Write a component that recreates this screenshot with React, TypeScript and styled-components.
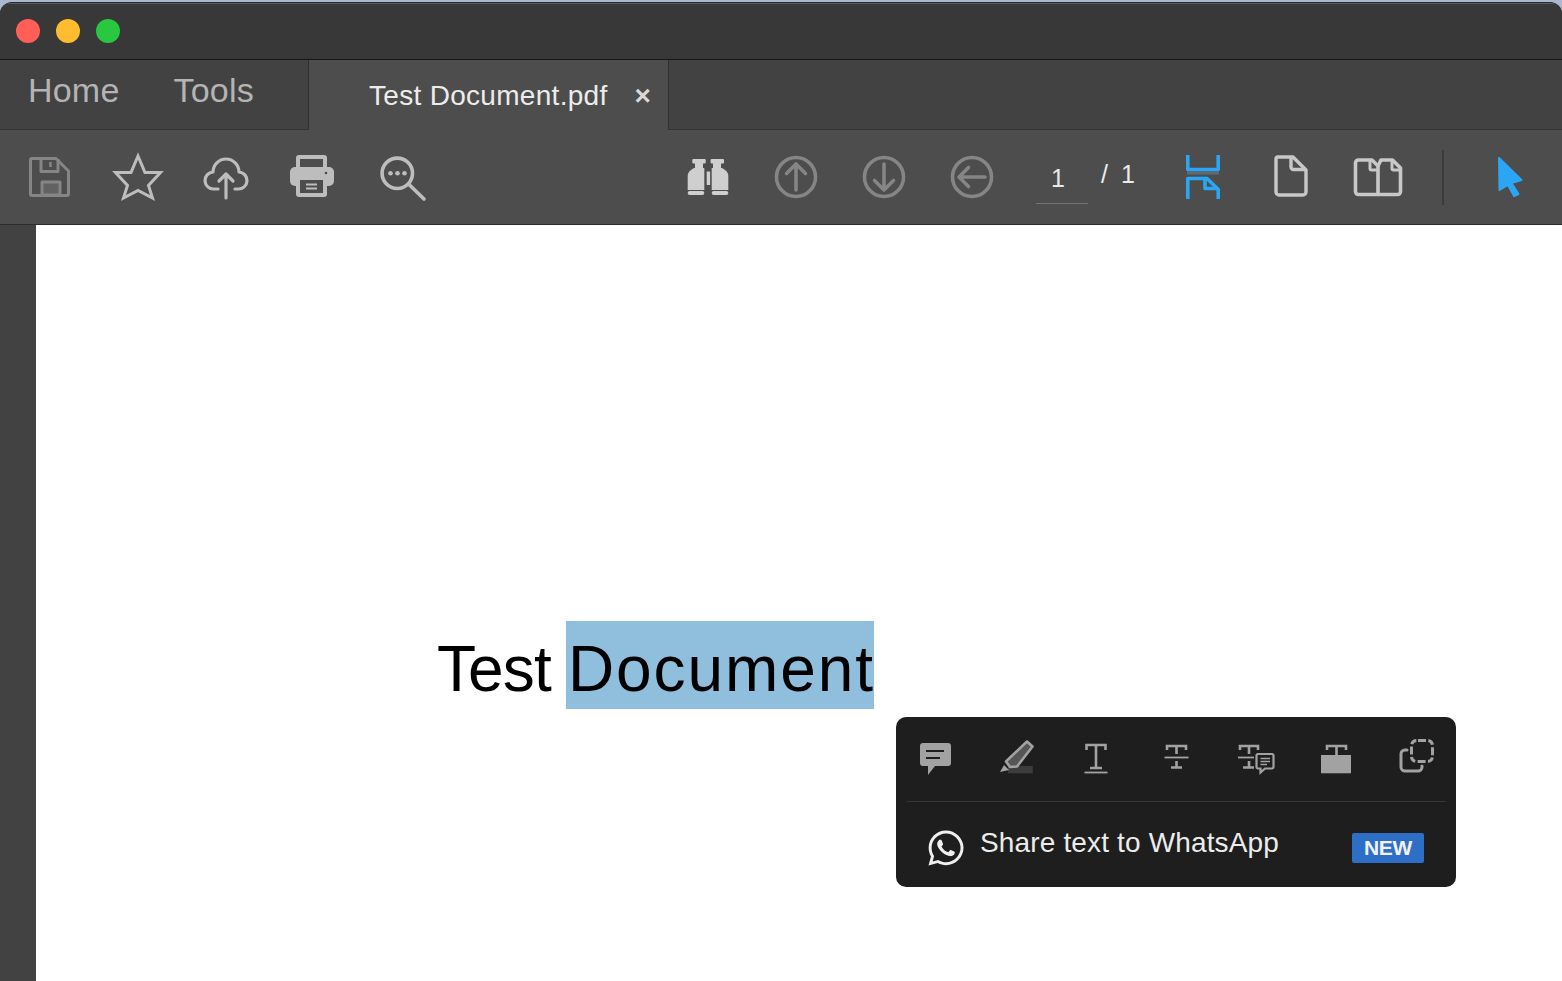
import React from "react";
import styled, { createGlobalStyle } from "styled-components";
import { FaWhatsapp } from "react-icons/fa";

const Global = createGlobalStyle`
  html, body { margin: 0; padding: 0; height: 100%; overflow: hidden; background: #aab8ce; }
  #root { height: 100%; }
  * { box-sizing: border-box; }
`;

const Win = styled.div`
  width: 1562px; height: 981px; display: flex; flex-direction: column; padding-top: 2px;
  font-family: "Liberation Sans", Arial, sans-serif; overflow: hidden;
`;
const Shell = styled.div`
  flex: 1; display: flex; flex-direction: column; min-height: 0;
  border-radius: 12px 12px 0 0; overflow: hidden; background: #383838;
  border-top: 1px solid #252a33; position: relative;
`;
const TitleBar = styled.div`
  height: 57px; flex: none; display: flex; align-items: center; gap: 16px; padding: 0 0 0 16px;
  background: #383838; border-bottom: 1px solid #141414; box-shadow: inset 0 1px #5e5e5e;
`;
const Light = styled.span<{ $c: string }>`
  width: 24px; height: 24px; border-radius: 50%; background: ${(p) => p.$c}; flex: none;
`;
const TabBar = styled.div`
  height: 70px; flex: none; display: flex; background: #424242; border-bottom: 1px solid #343434;
`;
const NavTabs = styled.div`
  width: 309px; flex: none; display: flex; align-items: center; padding: 0 0 9px 28px; gap: 54px;
  font-size: 34px; color: #b4b4b4; border-right: 1px solid #303030;
`;
const NavTab = styled.span<{ $spacing: number }>`
  letter-spacing: ${(p) => p.$spacing}px;
`;
const DocTab = styled.div`
  width: 360px; height: 70px; flex: none; display: flex; align-items: center; background: #4d4d4d;
  padding: 2px 0 0 60px; color: #ececec; font-size: 28px; letter-spacing: 0.3px; border-right: 1px solid #303030;
  position: relative; z-index: 1;
`;
const Close = styled.span`
  margin-left: 27px; font-size: 28px; font-weight: 700; color: #d8d8d8; line-height: 1;
`;
const Toolbar = styled.div`
  height: 95px; flex: none; display: flex; align-items: center; padding-left: 6px;
  background: #4d4d4d; border-bottom: 1px solid #2c2c2c;
`;
const Slot = styled.svg`
  width: 88px; height: 94px; flex: none; display: block;
`;
const Spacer = styled.div`
  width: 218px; flex: none;
`;
const PageBox = styled.div`
  width: 52px; height: 94px; flex: none; margin-left: 20px; padding-top: 33px; text-align: center;
  font-size: 25px; color: #e8e8e8; position: relative; padding-right: 8px;
  line-height: 30px;
  &::after { content: ""; position: absolute; left: 0; right: 0; top: 73px; height: 1px; background: #757575; }
`;
const PageTotal = styled.div`
  width: 71px; height: 94px; flex: none; padding: 29px 0 0 13px; font-size: 25px; color: #ececec;
  word-spacing: 6px; line-height: 30px;
`;
const VDivider = styled.div`
  width: 2px; height: 55px; flex: none; background: #3b3b3b; margin: 0 23px 0 19px;
`;
const Main = styled.div`
  flex: 1; display: flex; min-height: 0; position: relative;
`;
const Side = styled.div`
  width: 36px; flex: none; background: #424242;
`;
const Paper = styled.div`
  flex: 1; background: #fff; padding: 396px 0 0 402px;
`;
const Line = styled.div`
  display: flex; height: 88px; align-items: flex-start; font-size: 64px; color: #000; line-height: 96px;
`;
const Plain = styled.span`
  width: 128px; letter-spacing: -0.9px; flex: none; margin-left: -1px; padding-left: 0;
`;
const Selected = styled.span`
  width: 308px; height: 88px; background: #8fbfdd; flex: none; letter-spacing: 1.9px; white-space: nowrap;
  padding-left: 2px; margin-left: 1px;
`;
const Popup = styled.div`
  position: absolute; left: 896px; top: 492px; width: 560px; height: 170px; border-radius: 10px;
  background: #1e1e1e; display: flex; flex-direction: column;
`;
const PopIcons = styled.div`
  display: flex; height: 85px; flex: none; position: relative;
  &::after { content: ""; position: absolute; left: 11px; right: 10px; bottom: 0; height: 1px; background: #363636; }
`;
const PopSlot = styled.svg`
  width: 80px; height: 84px; flex: none; display: block;
`;
const ShareRow = styled.div`
  flex: 1; display: flex; align-items: center; padding: 0 32px 0 30px; color: #ececec; font-size: 28px;
`;
const WA = styled(FaWhatsapp)`
  width: 40px; height: 40px; flex: none; margin: 7px 14px 0 0; color: #efefef;
`;
const ShareText = styled.span`
  flex: 1; padding-bottom: 4px; white-space: nowrap; letter-spacing: 0.15px;
`;
const Badge = styled.span`
  width: 72px; height: 30px; background: #2d6fc6; border-radius: 2px; color: #f2f2f2; font-size: 21px;
  font-weight: 700; display: flex; align-items: center; justify-content: center; letter-spacing: -0.4px;
  margin-top: 7px;
`;

const G1 = "#858585";
const G2 = "#bdbdbd";
const G3 = "#a2a2a2";
const BLUE = "#2aa6f5";
const BG = "#4d4d4d";
const POP = "#1e1e1e";

const ArrowCircle = ({ d }: { d: string }) => (
  <Slot viewBox="0 0 88 94" fill="none" stroke={G1} strokeWidth={3.6} strokeLinecap="round" strokeLinejoin="round">
    <circle cx="44" cy="47" r="19.5" />
    <path d={d} />
  </Slot>
);

export default function App() {
  return (
    <Win>
      <Global />
      <Shell>
        <TitleBar>
          <Light $c="#ff5f57" />
          <Light $c="#febc2e" />
          <Light $c="#28c840" />
        </TitleBar>
        <TabBar>
          <NavTabs>
            <NavTab $spacing={0.2}>Home</NavTab>
            <NavTab $spacing={0.2}>Tools</NavTab>
          </NavTabs>
          <DocTab>
            Test Document.pdf<Close>×</Close>
          </DocTab>
        </TabBar>
        <Toolbar>
          {/* save */}
          <Slot viewBox="0 0 88 94" fill="none" stroke={G1} strokeWidth={3} strokeLinejoin="round">
            <path d="M26 28.5H50L62.5 41V64a1.5 1.5 0 0 1-1.5 1.5H26a1.5 1.5 0 0 1-1.5-1.5V30a1.5 1.5 0 0 1 1.5-1.5Z" />
            <path d="M35 29V41.5H52V29" />
            <path d="M44.5 32V37" strokeWidth={2.5} />
            <rect x="36" y="52" width="18" height="13" fill="#626262" />
          </Slot>
          {/* star */}
          <Slot viewBox="0 0 88 94" fill="none" stroke={G2} strokeWidth={3} strokeLinejoin="miter">
            <path d="M44 26L51 42.5H66.5L54.5 55.5L58.5 68L44 60.5L29.5 68L33.5 55.5L21.5 42.5H37Z" />
          </Slot>
          {/* upload */}
          <Slot viewBox="0 0 88 94" fill="none" stroke={G2} strokeWidth={3.2} strokeLinecap="round" strokeLinejoin="round">
            <path d="M36 59H32A8.5 8.5 0 0 1 31 42A13 13 0 0 1 57 42A8.5 8.5 0 0 1 56 59H53" />
            <path d="M44 68V44M37 51L44 44L51 51" />
          </Slot>
          {/* print */}
          <Slot viewBox="0 0 88 94">
            <rect x="26" y="25" width="31" height="22" rx="3" fill={G2} />
            <rect x="30" y="29" width="23" height="9" fill={BG} />
            <rect x="20" y="37" width="44" height="19" rx="5" fill={G2} />
            <rect x="26" y="47" width="31" height="20" rx="3" fill={G2} />
            <rect x="30" y="50" width="23" height="13" fill={BG} />
            <path d="M36 54.5H47M36 58.5H47" stroke={G2} strokeWidth={1.8} />
            <circle cx="56" cy="43" r="1.3" fill={BG} />
          </Slot>
          {/* search */}
          <Slot viewBox="0 0 88 94" fill="none" stroke={G2} strokeWidth={3.6} strokeLinecap="round">
            <circle cx="39.3" cy="43.3" r="15.2" />
            <path d="M50.5 54L66 69" />
            <g fill={G2} stroke="none">
              <circle cx="32.5" cy="43.3" r="2.3" />
              <circle cx="39.5" cy="43.3" r="2.3" />
              <circle cx="46.5" cy="43.3" r="2.3" />
            </g>
          </Slot>
          <Spacer />
          {/* binoculars */}
          <Slot viewBox="0 0 88 94" fill="#cfcfcf">
            <rect x="28.3" y="29" width="13.4" height="4.4" rx="1" />
            <rect x="31" y="33" width="8" height="6" />
            <rect x="46.6" y="29" width="13.4" height="4.4" rx="1" />
            <rect x="49" y="33" width="8" height="6" />
            <path d="M30 38H40.3V60H23.7V46Q23.7 41 30 38Z" />
            <path d="M47.7 38H58Q64.3 41 64.3 46V60H47.7Z" />
            <rect x="42.7" y="41.5" width="3.4" height="13.5" />
            <rect x="23.7" y="61" width="16.6" height="4" rx="2" />
            <rect x="47.7" y="61" width="16.6" height="4" rx="2" />
          </Slot>
          <ArrowCircle d="M44 60V34M34.5 43.5L44 34L53.5 43.5" />
          <ArrowCircle d="M44 34V60M34.5 50.5L44 60L53.5 50.5" />
          <ArrowCircle d="M57 47H31M40.5 37.5L31 47L40.5 56.5" />
          <PageBox>1</PageBox>
          <PageTotal>/ 1</PageTotal>
          {/* fit */}
          <Slot viewBox="0 0 88 94" fill="none" stroke={BLUE} strokeWidth={3.6} strokeLinejoin="round">
            <rect x="28" y="41.5" width="32" height="3" fill="#5f6a72" stroke="none" />
            <path d="M28.8 25V39.5H59.2V25" />
            <path d="M28.8 69V48.5H48L59.2 59.5V69" />
            <path d="M46 48.5V58.5H59.2" />
          </Slot>
          {/* page */}
          <Slot viewBox="0 0 88 94" fill="none" stroke="#c8c8c8" strokeWidth={3.4} strokeLinejoin="round">
            <path d="M31 27H46L59 40V62a3 3 0 0 1-3 3H32a3 3 0 0 1-3-3V29a2 2 0 0 1 2-2Z" />
            <path d="M44 27V37a2.5 2.5 0 0 0 2.5 2.5H59" />
          </Slot>
          {/* two pages */}
          <Slot viewBox="0 0 88 94" fill="none" stroke="#c8c8c8" strokeWidth={3.6} strokeLinejoin="round">
            <path d="M23.500 30H37L43 36V64.500H23.500a3 3 0 0 1-3-3V33a3 3 0 0 1 3-3Z" />
            <path d="M43 36L46 30H57.500L65.500 38V61.500a3 3 0 0 1-3 3H43" />
            <path d="M35 30V38.500a1.500 1.500 0 0 0 1.500 1.500H43M57 30V38.500a1.500 1.500 0 0 0 1.500 1.500H65.500" strokeWidth={3} />
          </Slot>
          <VDivider />
          {/* cursor */}
          <Slot viewBox="0 0 88 94" fill={BLUE} stroke={BLUE} strokeWidth={2} strokeLinejoin="round">
            <path d="M32 28L54.500 50L44.500 53L51.500 64L47 66L41 55L32.500 60Z" />
          </Slot>
        </Toolbar>
        <Main>
          <Side />
          <Paper>
            <Line>
              <Plain>Test</Plain>
              <Selected>Document</Selected>
            </Line>
          </Paper>
          <Popup>
            <PopIcons>
              {/* comment */}
              <PopSlot viewBox="0 0 80 84">
                <path fill={G3} d="M27 26H52a3 3 0 0 1 3 3V46a3 3 0 0 1-3 3H39L32 58V49H27a3 3 0 0 1-3-3V29a3 3 0 0 1 3-3Z" />
                <path d="M30 34H48M30 41H44" stroke={POP} strokeWidth={2} />
              </PopSlot>
              {/* highlighter */}
              <PopSlot viewBox="0 0 80 84">
                <rect x="32" y="49" width="24.700" height="7.300" fill="#3c3c3c" />
                <path d="M51 24.500L56.500 29.500L41 49.500L34 50L30 44.500Z" fill="#565656" stroke={G3} strokeWidth={2.6} strokeLinejoin="round" />
                <path d="M28 48L33 53L24 55Z" fill={G3} />
              </PopSlot>
              {/* T underline */}
              <PopSlot viewBox="0 0 80 84" fill="none" stroke={G3} strokeWidth={2.6}>
                <path d="M30.500 33V28H49.500V33M40 28V50M34 51H46" />
                <path d="M28.500 55.500H51.500" strokeWidth={1.8} />
              </PopSlot>
              {/* T strike */}
              <PopSlot viewBox="0 0 80 84" fill="none" stroke={G3} strokeWidth={2.6}>
                <path d="M31 33V29H50V33M40.500 29V37M40.500 44V50M35 50.500H46" />
                <path d="M28.500 40.500H52.500" strokeWidth={1.8} />
              </PopSlot>
              {/* T comment */}
              <PopSlot viewBox="0 0 80 84" fill="none" stroke={G3} strokeWidth={2.6}>
                <path d="M24 33V29H42V33M33 29V37M33 44V50M27 50.500H38" />
                <path d="M22 40.500H38" strokeWidth={1.8} />
                <path d="M42 37H56a1.500 1.500 0 0 1 1.500 1.500V50a1.500 1.500 0 0 1-1.500 1.500H49L44.500 55.500V51.500H42a1.500 1.500 0 0 1-1.500-1.500V38.500A1.500 1.500 0 0 1 42 37Z" fill={POP} strokeWidth={2.2} />
                <path d="M44.500 41.500H54M44.500 44.500H54M44.500 47.500H51" strokeWidth={1.4} />
              </PopSlot>
              {/* T box */}
              <PopSlot viewBox="0 0 80 84">
                <path d="M31 33V29H50V33M40.500 29V38" fill="none" stroke={G3} strokeWidth={2.6} />
                <rect x="25" y="38" width="30" height="18.300" fill={G3} />
              </PopSlot>
              {/* select */}
              <PopSlot viewBox="0 0 80 84" fill="none" stroke={G3} strokeWidth={3}>
                <rect x="35.500" y="23.500" width="21" height="21" rx="5" strokeDasharray="8 2.4 6 2.45" strokeDashoffset="-1.5" />
                <path d="M31 33H29a4 4 0 0 0-4 4V50a4 4 0 0 0 4 4H42a4 4 0 0 0 4-4V49" strokeLinecap="round" />
              </PopSlot>
            </PopIcons>
            <ShareRow>
              <WA />
              <ShareText>Share text to WhatsApp</ShareText>
              <Badge>NEW</Badge>
            </ShareRow>
          </Popup>
        </Main>
      </Shell>
    </Win>
  );
}
